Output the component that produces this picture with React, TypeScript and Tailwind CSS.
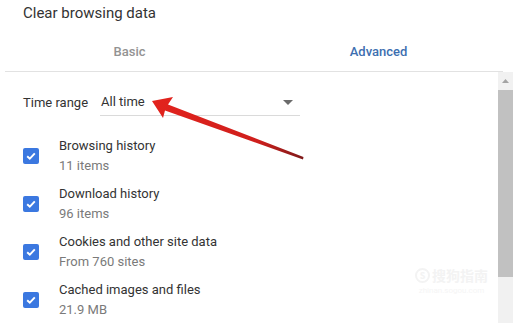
import React from "react";

const items = [
  { label: "Browsing history", sub: "11 items" },
  { label: "Download history", sub: "96 items" },
  { label: "Cookies and other site data", sub: "From 760 sites" },
  { label: "Cached images and files", sub: "21.9 MB" },
];

function Check() {
  return (
    <div className="w-[16px] h-[16px] rounded-[2px] bg-[#3b78e0] flex items-center justify-center shrink-0">
      <svg width="12" height="12" viewBox="0 0 12 12">
        <path d="M2.2 6.2 L4.8 8.7 L9.8 3.4" fill="none" stroke="#fff" strokeWidth="1.9" />
      </svg>
    </div>
  );
}

export default function App() {
  return (
    <div
      className="relative w-[516px] h-[323px] bg-white overflow-hidden"
      style={{ fontFamily: "Roboto, 'Noto Sans', Arial, sans-serif" }}
    >
      <div className="pl-[23px] pt-[3px] h-[32px] text-[15px] leading-[20px] text-[#333333]">
        Clear browsing data
      </div>
      <div className="flex ml-[5px] w-[498px] h-[40px] border-b border-[#e2e2e2] text-[13px] font-medium">
        <div className="flex-1 flex items-center justify-center text-[#939393] pt-[1px]">Basic</div>
        <div className="flex-1 flex items-center justify-center text-[#3d6fb0] pt-[1px]">Advanced</div>
      </div>
      <div className="flex">
        <div className="flex-1 pl-[23px]">
          <div className="flex items-center h-[49px] pt-[12px] text-[13px] text-[#333333]">
            <span className="w-[77px]">Time range</span>
            <div className="relative w-[200px] h-[26px] border-b border-[#dadada] flex items-center">
              <span className="pl-[1px]">All time</span>
              <svg className="absolute right-[7px] top-[10px]" width="10" height="5" viewBox="0 0 10 5">
                <path d="M0 0 L10 0 L5 5 Z" fill="#6b6b6b" />
              </svg>
            </div>
          </div>
          <div className="flex flex-col pt-[11px]">
            {items.map((it) => (
              <div key={it.label} className="flex items-center h-[48px]">
                <Check />
                <div className="ml-[20px] flex flex-col text-[13px] leading-[20px]">
                  <span className="text-[#333333]">{it.label}</span>
                  <span className="text-[#7a7a7a]">{it.sub}</span>
                </div>
              </div>
            ))}
          </div>
        </div>
        <div className="w-[15px] mr-[3px] h-[251px] bg-[#f1f1f1] flex flex-col">
          <div className="h-[18px] flex items-center justify-center">
            <svg width="7" height="4" viewBox="0 0 7 4">
              <path d="M0 4 L3.5 0 L7 4 Z" fill="#a3a3a3" />
            </svg>
          </div>
          <div className="h-[187px] bg-[#c1c1c1]" />
        </div>
      </div>

      {/* watermark */}
      <div className="absolute left-[415px] top-[265px] flex flex-col items-center text-[#f3f3f3] pointer-events-none">
        <div className="flex items-center gap-[2px] text-[14px] font-bold" style={{ fontFamily: "'Noto Sans CJK SC', sans-serif" }}>
          <span className="w-[15px] h-[15px] rounded-full border-[2px] border-[#f3f3f3] flex items-center justify-center text-[9px] leading-none">S</span>
          <span>搜狗指南</span>
        </div>
        <span className="text-[8px] leading-[10px] text-[#f5f5f5]">zhinan.sogou.com</span>
      </div>

      {/* red arrow annotation */}
      <svg className="absolute left-0 top-0 pointer-events-none" width="516" height="323" viewBox="0 0 516 323">
        <defs>
          <linearGradient id="ag" x1="150" y1="100" x2="304" y2="158" gradientUnits="userSpaceOnUse">
            <stop offset="0" stopColor="#e3231d" />
            <stop offset="0.7" stopColor="#cf1f1c" />
            <stop offset="1" stopColor="#7d1a1a" />
          </linearGradient>
        </defs>
        <path
          d="M152 101 L173 97 L168 104.5 L303.5 157 L303 159.5 L165 110.5 L163 118 Z"
          fill="url(#ag)"
        />
      </svg>
    </div>
  );
}
